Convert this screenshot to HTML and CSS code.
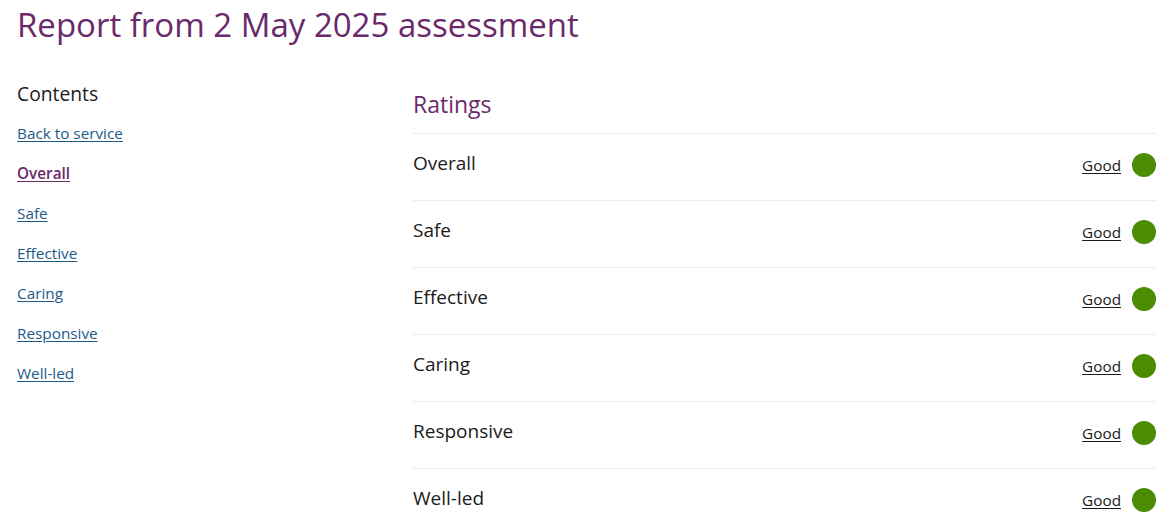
FILE: index.html
```html
<!DOCTYPE html>
<html lang="en">
<head>
<meta charset="utf-8">
<title>Report from 2 May 2025 assessment</title>
<link rel="stylesheet" href="styles.css">
</head>
<body>
<div class="page">
  <h1 class="title">Report from 2 May 2025 assessment</h1>
  <div class="layout">
    <nav class="contents">
      <h2 class="contents-heading">Contents</h2>
      <ul class="contents-list">
        <li><a href="#" class="contents-link">Back to service</a></li>
        <li><a href="#" class="contents-link is-current">Overall</a></li>
        <li><a href="#" class="contents-link">Safe</a></li>
        <li><a href="#" class="contents-link">Effective</a></li>
        <li><a href="#" class="contents-link">Caring</a></li>
        <li><a href="#" class="contents-link">Responsive</a></li>
        <li><a href="#" class="contents-link">Well-led</a></li>
      </ul>
    </nav>
    <section class="ratings">
      <h2 class="ratings-heading">Ratings</h2>
      <ul class="ratings-list">
        <li class="rating-row"><span class="rating-name">Overall</span><span class="rating-value"><a href="#" class="rating-link">Good</a><span class="rating-dot"></span></span></li>
        <li class="rating-row"><span class="rating-name">Safe</span><span class="rating-value"><a href="#" class="rating-link">Good</a><span class="rating-dot"></span></span></li>
        <li class="rating-row"><span class="rating-name">Effective</span><span class="rating-value"><a href="#" class="rating-link">Good</a><span class="rating-dot"></span></span></li>
        <li class="rating-row"><span class="rating-name">Caring</span><span class="rating-value"><a href="#" class="rating-link">Good</a><span class="rating-dot"></span></span></li>
        <li class="rating-row"><span class="rating-name">Responsive</span><span class="rating-value"><a href="#" class="rating-link">Good</a><span class="rating-dot"></span></span></li>
        <li class="rating-row"><span class="rating-name">Well-led</span><span class="rating-value"><a href="#" class="rating-link">Good</a><span class="rating-dot"></span></span></li>
      </ul>
    </section>
  </div>
</div>
</body>
</html>
```
FILE: styles.css
```css
* { box-sizing: border-box; }
html, body { margin: 0; padding: 0; background: #fff; }
body {
  font-family: "Open Sans", "Noto Sans", sans-serif;
  color: #1b1b1b;
}
.page {
  padding: 0 20px 0 17px;
}
.title {
  margin: 0;
  padding-top: 3px;
  font-size: 33px;
  font-weight: 400;
  line-height: 44px;
  color: #6a2a6a;
}
.layout {
  display: grid;
  grid-template-columns: 396px 1fr;
  margin-top: 33px;
}
.contents-heading {
  margin: 0;
  font-size: 19.3px;
  font-weight: 400;
  line-height: 28px;
  color: #1b1b1b;
}
.contents-list {
  list-style: none;
  margin: 0;
  padding: 0;
  margin-top: 14px;
  display: flex;
  flex-direction: column;
  gap: 18px;
}
.contents-list li { line-height: 22px; }
.contents-link {
  font-size: 15.3px;
  color: #1c5a8a;
  text-decoration: underline;
  text-underline-offset: 2px;
}
.contents-link.is-current {
  color: #6a2a6a;
  font-weight: 600;
}
.ratings {
  padding-top: 8px;
}
.ratings-heading {
  margin: 0;
  font-size: 23px;
  font-weight: 400;
  line-height: 32px;
  color: #6a2a6a;
  padding-bottom: 13px;
}
.ratings-list {
  list-style: none;
  margin: 0;
  padding: 0;
}
.rating-row {
  display: flex;
  align-items: center;
  justify-content: space-between;
  height: 67px;
  border-top: 1px solid #ececec;
  padding-bottom: 8px;
}
.rating-name {
  font-size: 19px;
  line-height: 28px;
  color: #1b1b1b;
}
.rating-value {
  display: flex;
  align-items: center;
  gap: 11px;
  padding-top: 3px;
}
.rating-link {
  font-size: 15.3px;
  color: #1b1b1b;
  text-decoration: underline;
  text-underline-offset: 2px;
}
.rating-dot {
  width: 24px;
  height: 24px;
  border-radius: 50%;
  background: #4b8c03;
}
```
